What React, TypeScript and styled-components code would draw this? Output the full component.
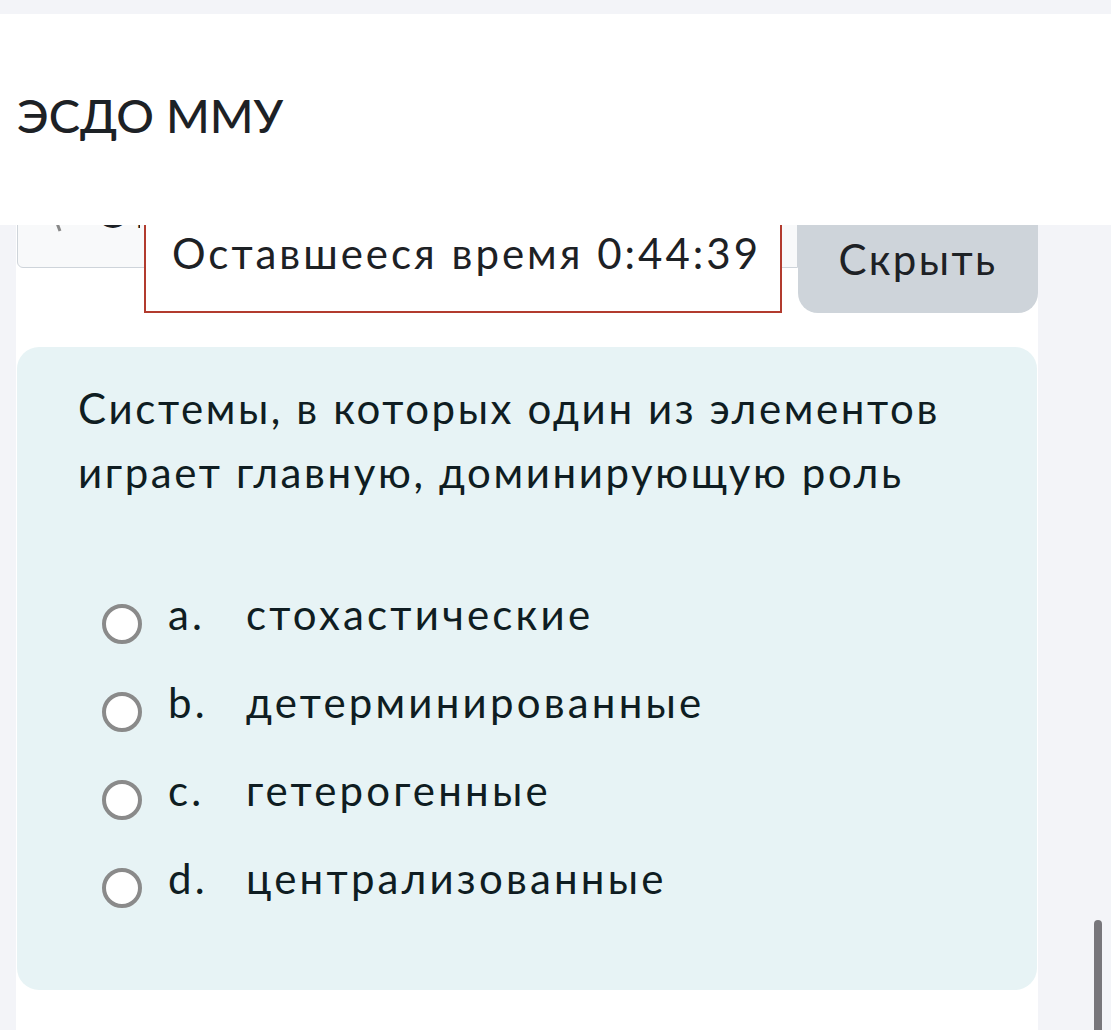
import React from 'react'
import styled, { createGlobalStyle } from 'styled-components'

const GlobalStyle = createGlobalStyle`
  html, body {
    margin: 0;
    padding: 0;
    background: #f3f4f8;
    font-family: Lato, "Noto Sans", sans-serif;
    color: #1d2125;
    overflow: hidden;
  }
`

const Page = styled.div`
  position: relative;
  height: 1030px;
  padding-top: 14px;
  box-sizing: border-box;
  overflow: hidden;
`

const Header = styled.header`
  position: absolute;
  top: 14px;
  left: 0;
  right: 0;
  height: 211px;
  box-sizing: border-box;
  padding: 0 0 10px 17px;
  background: #fff;
  z-index: 10;
  display: flex;
  align-items: center;
`

const SiteName = styled.div`
  font-size: 47px;
  font-weight: 500;
  color: #1d2125;
`

const Main = styled.main`
  margin: 0 73px 0 16px;
  background: #fff;
  padding-top: 166px;
  height: 850px;
`

const NavRow = styled.div`
  position: relative;
  display: flex;
  align-items: flex-start;
`

const NavBox = styled.div`
  flex: 1;
  height: 88px;
  box-sizing: border-box;
  margin-left: 1px;
  background: #f8f9fa;
  border: 1px solid #ced4da;
  border-radius: 0 0 0 6px;
  display: flex;
  align-items: flex-end;
  padding: 0 0 34px 28px;
  gap: 30px;
  font-size: 42px;
  font-weight: 500;
  line-height: 1;
  overflow: hidden;
`

const NavLabel = styled.span`
  width: 44px;
  overflow: hidden;
  white-space: nowrap;
`

const Chevron = styled.svg`
  width: 20px;
  height: 30px;
  flex: none;
`

const Timer = styled.div`
  position: absolute;
  left: 128px;
  top: 13px;
  width: 638px;
  height: 120px;
  box-sizing: border-box;
  background: #fff;
  border: 2px solid #b23b2e;
  display: flex;
  align-items: flex-end;
  padding: 0 0 37px 26px;
  font-size: 42px;
  line-height: 1;
  letter-spacing: 3px;
  color: #1d2125;
`

const HideButton = styled.button`
  width: 240px;
  height: 133px;
  border: none;
  border-radius: 0 0 20px 20px;
  background: #ced4da;
  color: #1d2125;
  font-family: inherit;
  font-size: 42px;
  letter-spacing: 2.4px;
  display: flex;
  align-items: flex-end;
  justify-content: center;
  padding-bottom: 33px;
  line-height: 1;
`

const QuestionCard = styled.section`
  margin: 34px 1px 0 1px;
  height: 643px;
  box-sizing: border-box;
  background: #e7f3f5;
  border-radius: 22px;
  padding: 29px 40px 0 61px;
`

const QuestionText = styled.div`
  font-size: 42px;
  line-height: 64px;
  color: #0f1d22;
  letter-spacing: 2.6px;
`

const Answers = styled.div`
  margin-top: 78px;
  padding-left: 24px;
  display: flex;
  flex-direction: column;
  gap: 24px;
`

const AnswerRow = styled.label`
  display: flex;
  align-items: center;
  height: 64px;
  font-size: 42px;
  letter-spacing: 3.2px;
  color: #0f1d22;
`

const Radio = styled.span`
  width: 40px;
  height: 40px;
  box-sizing: border-box;
  border: 4px solid #8a8a8a;
  border-radius: 50%;
  background: #fff;
  flex: none;
  margin-top: 20px;
`

const Letter = styled.span`
  width: 78px;
  margin-left: 26px;
  flex: none;
`

const Scrollbar = styled.div`
  position: absolute;
  left: 1094px;
  top: 920px;
  width: 8px;
  height: 130px;
  border-radius: 4px;
  background: #77767b;
`

const answers = [
  { letter: 'a.', text: 'стохастические' },
  { letter: 'b.', text: 'детерминированные' },
  { letter: 'c.', text: 'гетерогенные' },
  { letter: 'd.', text: 'централизованные' },
]

export default function App () {
  return (
    <Page>
      <GlobalStyle />
      <Header>
        <SiteName>ЭСДО ММУ</SiteName>
      </Header>
      <Main>
        <NavRow>
          <NavBox>
            <Chevron viewBox="0 0 20 30">
              <path d="M4 2 L14 28" stroke="#888" strokeWidth="3" fill="none" />
            </Chevron>
            <NavLabel>Открыть</NavLabel>
          </NavBox>
          <Timer>Оставшееся время 0:44:39</Timer>
          <HideButton>Скрыть</HideButton>
        </NavRow>
        <QuestionCard>
          <QuestionText>
            Системы, в которых один из элементов
            <br />
            играет главную, доминирующую роль
          </QuestionText>
          <Answers>
            { answers.map( a => (
              <AnswerRow key={ a.letter }>
                <Radio />
                <Letter>{ a.letter }</Letter>
                <span>{ a.text }</span>
              </AnswerRow>
            ) ) }
          </Answers>
        </QuestionCard>
      </Main>
      <Scrollbar />
    </Page>
  )
}
